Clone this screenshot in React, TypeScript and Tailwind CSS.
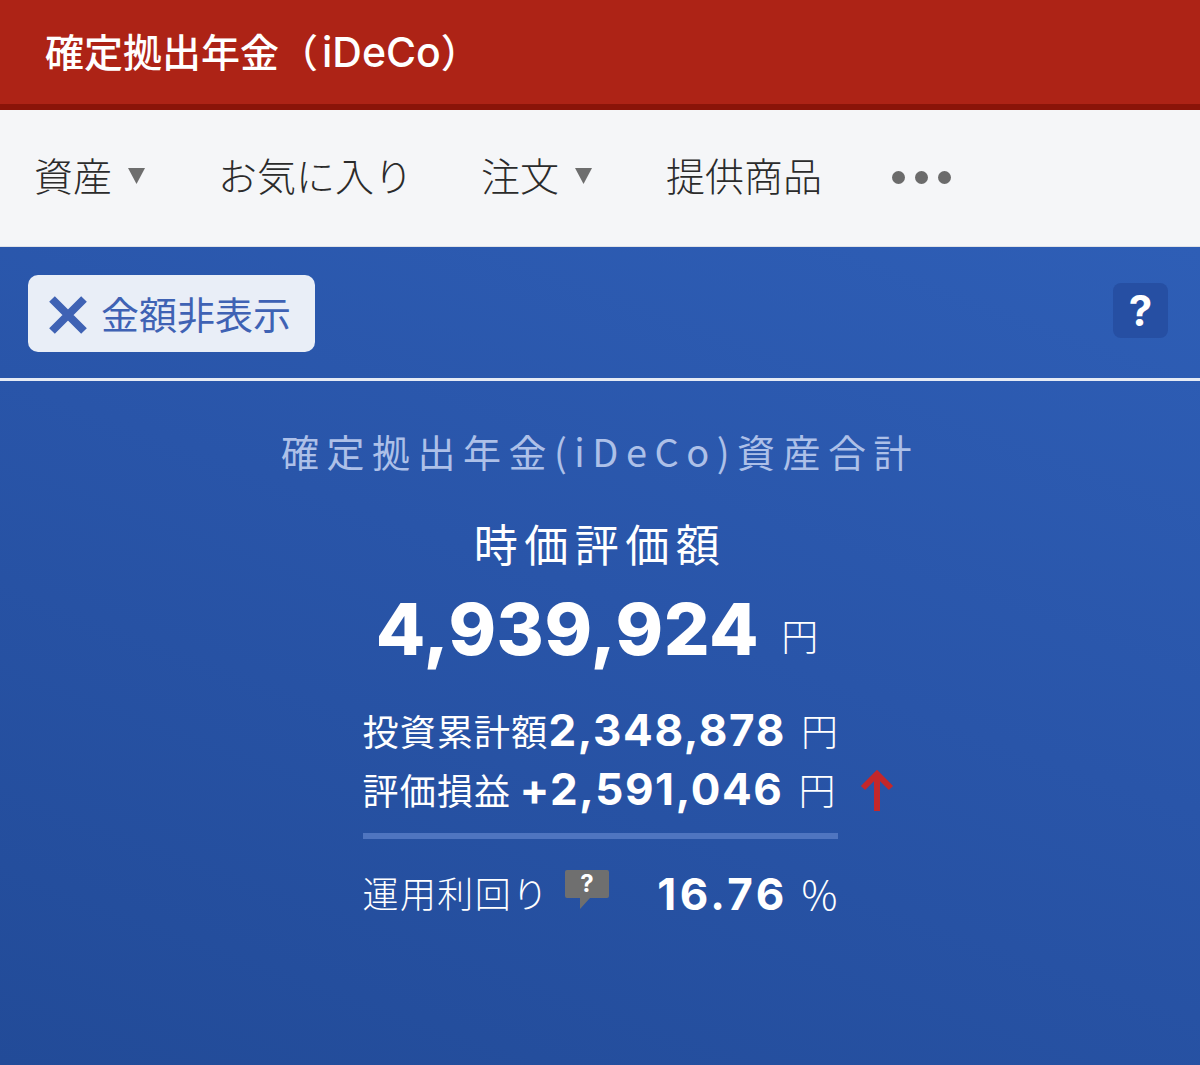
import React from "react";

const jp = "font-['Noto_Sans_CJK_JP','Noto_Sans',sans-serif]";
const num = "font-['Inter','Noto_Sans_CJK_JP',sans-serif]";

const Caret = () => (
  <svg width="17" height="16" viewBox="0 0 17 16" className="ml-[16px] mt-[4px]">
    <path d="M0 0H17L8.5 16Z" fill="#6e6e6e" />
  </svg>
);

const NavItem = ({ label, caret, className }: { label: string; caret?: boolean; className: string }) => (
  <div className={`flex items-center ${className}`}>
    <span className="text-[39px] leading-none font-light text-[#2b2b2b]">{label}</span>
    {caret ? <Caret /> : null}
  </div>
);

const Row = ({ label, value, unit, className }: { label: string; value: string; unit: string; className?: string }) => (
  <div className={`flex items-center justify-between h-[59px] ${className ?? ""}`}>
    <span className="text-[36px] leading-none font-normal tracking-[1.2px] whitespace-nowrap">{label}</span>
    <span className="flex items-baseline whitespace-nowrap">
      <span className={`${num} text-[44px] leading-none font-bold tracking-[1.6px]`}>{value}</span>
      <span className="ml-[15px] text-[37px] leading-none font-light">{unit}</span>
    </span>
  </div>
);

export default function App() {
  return (
    <div className={`${jp} w-[1200px] h-[1065px] overflow-hidden flex flex-col`}>
      <header className="h-[110px] shrink-0 bg-[#ad2316] border-b-[6px] border-[#8a1409] flex items-center pl-[45px]">
        <h1 className="text-[39px] leading-none font-medium text-white whitespace-nowrap [text-spacing-trim:space-all]">
          確定拠出年金（<span className="font-['Inter',sans-serif] font-medium text-[41px] ml-[4px]">iDeCo</span>）
        </h1>
      </header>

      <nav className="h-[137px] shrink-0 bg-[#f5f6f8] border-b border-[#dfe2e8] flex items-center pl-[34px] pb-[8px]">
        <NavItem label="資産" caret className="w-[184px]" />
        <NavItem label="お気に入り" className="w-[263px]" />
        <NavItem label="注文" caret className="w-[185px]" />
        <NavItem label="提供商品" className="w-[226px]" />
        <div className="flex gap-[10px] pt-[6px]">
          <span className="w-[13px] h-[13px] rounded-full bg-[#6b6b6b]" />
          <span className="w-[13px] h-[13px] rounded-full bg-[#6b6b6b]" />
          <span className="w-[13px] h-[13px] rounded-full bg-[#6b6b6b]" />
        </div>
      </nav>

      <main className="flex-1 bg-[linear-gradient(20deg,#224b98_0%,#2955a9_55%,#2e5eb6_100%)] text-white">
        <div className="h-[134px] border-b-[3px] border-[#e6ebf5] flex items-start justify-between pl-[28px] pr-[32px] pt-[28px]">
          <button className="w-[287px] h-[77px] rounded-[10px] bg-[#e9eef7] flex items-center pl-[20px] pb-[2px]">
            <svg width="40" height="40" viewBox="0 0 40 40" className="mt-[4px]">
              <path d="M4 4L36 36M36 4L4 36" stroke="#3f62b4" strokeWidth="8" />
            </svg>
            <span className="ml-[13px] text-[38px] leading-none font-normal text-[#3f62b4] whitespace-nowrap">金額非表示</span>
          </button>
          <div className={`${num} mt-[8px] w-[55px] h-[55px] rounded-[8px] bg-[#264fa3] flex items-center justify-center text-[42px] leading-none font-bold`}>
            ?
          </div>
        </div>

        <section className="flex flex-col items-center">
          <p className="mt-[44px] text-[38px] leading-[52px] font-normal tracking-[7.5px] text-[#adc0e8] whitespace-nowrap">
            確定拠出年金(iDeCo)資産合計
          </p>
          <p className="mt-[35px] text-[44px] leading-[62px] font-normal tracking-[6.5px] whitespace-nowrap">時価評価額</p>
          <div className="mt-[10px] mr-[6px] flex items-center whitespace-nowrap">
            <span className={`${num} text-[72px] leading-[90px] font-extrabold tracking-[0.6px]`}>4,939,924</span>
            <span className="ml-[22px] mt-[12px] text-[37px] leading-none font-light">円</span>
          </div>

          <div className="relative mt-[26px] w-[475px]">
            <Row label="投資累計額" value="2,348,878" unit="円" />
            <Row label="評価損益" value="+2,591,046" unit="円" className="pr-[2px]" />
            <svg width="34" height="42" viewBox="0 0 34 42" className="absolute left-[497px] top-[70px]">
              <path d="M17 41V4M3 18L17 4L31 18" fill="none" stroke="#c4272a" strokeWidth="6" />
            </svg>
            <div className="mt-[15px] h-[6px] bg-[#4f75c0]" />
            <div className="flex items-center h-[80px] mt-[15px]">
              <span className="mb-[4px] text-[36px] leading-none font-light tracking-[1.4px] whitespace-nowrap">運用利回り</span>
              <svg width="46" height="42" viewBox="0 0 46 42" className="ml-[14px] mb-[8px]">
                <path d="M3 1H43A2 2 0 0 1 45 3V27A2 2 0 0 1 43 29H26L16 40V29H3A2 2 0 0 1 1 27V3A2 2 0 0 1 3 1Z" fill="#6f6f6f" />
                <text x="23" y="23" textAnchor="middle" fontSize="24" fontWeight="700" fontFamily="Inter" fill="#fff">?</text>
              </svg>
              <span className="ml-auto flex items-baseline whitespace-nowrap">
                <span className={`${num} text-[44px] leading-none font-bold tracking-[3.4px]`}>16.76</span>
                <span className="ml-[14px] text-[40px] leading-none font-light">%</span>
              </span>
            </div>
          </div>
        </section>
      </main>
    </div>
  );
}
